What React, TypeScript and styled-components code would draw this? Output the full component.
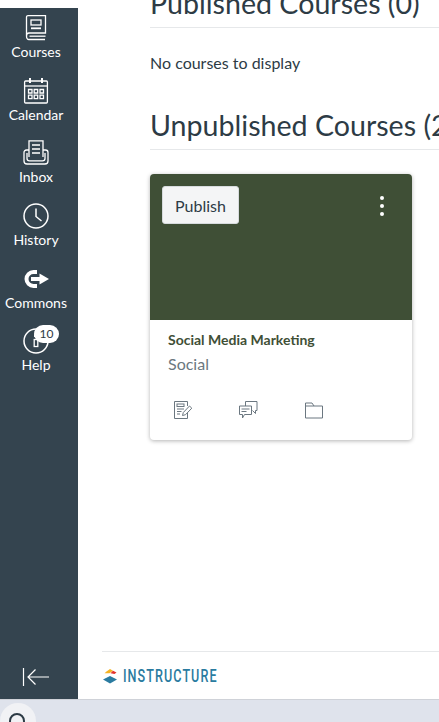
import styled, { createGlobalStyle } from 'styled-components'
import { FC, ReactNode } from 'react'

const GlobalStyle = createGlobalStyle`
  html, body {
    margin: 0;
    padding: 0;
    height: 100%;
    overflow: hidden;
    background: #fff;
    font-family: Lato, "Liberation Sans", sans-serif;
  }
`

const NAV_ITEMS: { label: string; icon: ReactNode; badge?: string }[] = [
  {
    label: 'Courses',
    icon: (
      <svg width="26" height="26" viewBox="0 0 26 26" fill="none" stroke="currentColor" strokeWidth="1.3">
        <path d="M3.5 21V2.2C3.5 1.2 4.2 .7 5 .7H22.5V18H6C4.5 18 3.5 19.5 3.5 21C3.5 23.3 5 24.5 6 24.5H22" />
        <path d="M6.5 21.2H22.5" />
        <rect x="8" y="5" width="10" height="5" />
        <path d="M8 13.3H18" strokeWidth="1.8" />
      </svg>
    ),
  },
  {
    label: 'Calendar',
    icon: (
      <svg width="26" height="26" viewBox="0 0 26 26" fill="none" stroke="currentColor" strokeWidth="1.3">
        <rect x="1.6" y="3" width="22.8" height="22" rx="1" />
        <path d="M1.6 8H24.4" />
        <path d="M7 0V5M19 0V5" strokeWidth="2" />
        <path
          d="M5.5 11.5h3.5v3.5h-3.5zM11.2 11.5h3.5v3.5h-3.5zM17 11.5h3.5v3.5h-3.5zM5.5 17.2h3.5v3.5h-3.5zM11.2 17.2h3.5v3.5h-3.5zM17 17.2h3.5v3.5h-3.5z"
        />
      </svg>
    ),
  },
  {
    label: 'Inbox',
    icon: (
      <svg width="26" height="26" viewBox="0 0 26 26" fill="none" stroke="currentColor" strokeWidth="1.3">
        <path d="M6 17V.8H20V17" />
        <path d="M9 5H17M9 9H17M9 13H17" strokeWidth="1.5" />
        <path d="M6 10H3.5C2 10 1 11 1 12.5V21C1 23 2.2 24 4 24H22C23.8 24 25 23 25 21V12.5C25 11 24 10 22.5 10H20" />
        <path d="M4 13V18.5C4 20 5 20.8 6.5 20.8H19.5C21 20.8 22 20 22 18.5V13" />
      </svg>
    ),
  },
  {
    label: 'History',
    icon: (
      <svg width="26" height="26" viewBox="0 0 26 26" fill="none" stroke="currentColor" strokeWidth="1.5">
        <circle cx="13" cy="13" r="12" />
        <path d="M13 5.5V13.5L18.5 18" />
      </svg>
    ),
  },
  {
    label: 'Commons',
    icon: (
      <svg width="26" height="26" viewBox="0 0 26 26">
        <path d="M14 6H10.5A7 7 0 0 0 10.5 20H14" fill="none" stroke="currentColor" strokeWidth="4" />
        <path d="M8 11H16.5V7.5L26 13L16.5 18.5V15H8Z" fill="currentColor" />
      </svg>
    ),
  },
  {
    label: 'Help',
    badge: '10',
    icon: (
      <svg width="26" height="26" viewBox="0 0 26 26" fill="none" stroke="currentColor" strokeWidth="1.5">
        <circle cx="13" cy="13" r="12" />
        <rect x="11.2" y="11.5" width="3.6" height="7" strokeWidth="1.3" />
        <path d="M11 6.5H14.5V9H11Z" fill="currentColor" stroke="none" />
      </svg>
    ),
  },
]

const App: FC = () => {
  return (
    <Page>
      <GlobalStyle />
      <Main>
        <Sidebar>
          <NavList>
            {NAV_ITEMS.map((item) => (
              <NavItem key={item.label}>
                <NavIcon>
                  {item.icon}
                  {item.badge && <Badge>{item.badge}</Badge>}
                </NavIcon>
                <NavLabel>{item.label}</NavLabel>
              </NavItem>
            ))}
          </NavList>
          <CollapseButton>
            <svg width="28" height="20" viewBox="0 0 28 20" fill="none" stroke="currentColor" strokeWidth="1.2">
              <path d="M1.5 1V19" />
              <path d="M27 10H6M13.5 2.5L6 10L13.5 17.5" />
            </svg>
          </CollapseButton>
        </Sidebar>
        <Content>
          <Scroller>
            <SectionHeading>Published Courses (0)</SectionHeading>
            <EmptyText>No courses to display</EmptyText>
            <SectionHeading>Unpublished Courses (2)</SectionHeading>
            <Card>
              <CardHero>
                <PublishButton>Publish</PublishButton>
                <KebabButton>
                  <i />
                  <i />
                  <i />
                </KebabButton>
              </CardHero>
              <CardBody>
                <CardTitle>Social Media Marketing</CardTitle>
                <CardSubtitle>Social</CardSubtitle>
                <CardActions>
                  <CardAction>
                    <svg width="20" height="20" viewBox="0 0 20 20" fill="none" stroke="currentColor" strokeWidth="1">
                      <path d="M14.5 6V1.5H1.5V18.5H14.5V13" />
                      <rect x="4" y="4" width="7" height="2.5" />
                      <path d="M4 9H11M4 11.5H8.5M4 14H7" />
                      <path d="M9.5 15.5L10.3 12.5L16.5 6L18.8 8.2L12.5 14.7Z" />
                    </svg>
                  </CardAction>
                  <CardAction>
                    <svg width="20" height="20" viewBox="0 0 20 20" fill="none" stroke="currentColor" strokeWidth="1">
                      <path d="M7.5 6V1.5H19V10.5H17.5V13.5L14.5 10.5" />
                      <path d="M1.5 6H13.5V14.5H6.5L4.5 18V14.5H1.5Z" />
                      <path d="M3.5 9H11.5M3.5 11.5H8.5" />
                    </svg>
                  </CardAction>
                  <CardAction>
                    <svg width="20" height="20" viewBox="0 0 20 20" fill="none" stroke="currentColor" strokeWidth="1">
                      <path d="M1.5 3H8L10 6H18.5V18H1.5Z" />
                      <path d="M1.5 6H10" />
                    </svg>
                  </CardAction>
                </CardActions>
              </CardBody>
            </Card>
          </Scroller>
          <Footer>
            <svg width="16" height="16" viewBox="0 0 16 16">
              <path d="M4.5 3.5L8 1L11 2.8L7.5 5.2H2.5Z" fill="#f5b324" />
              <path d="M8.5 5.2L11 2.8L14.5 4.5L12.5 6Z" fill="#e3322c" />
              <path d="M8 8L15 11.5L8 15.5L1 11.5Z" fill="#2a7ba0" />
            </svg>
            <FooterBrand>INSTRUCTURE</FooterBrand>
          </Footer>
        </Content>
      </Main>
      <BottomBar>
        <SearchCircle>
          <svg width="20" height="20" viewBox="0 0 20 20" fill="none" stroke="#2d3b45" strokeWidth="2">
            <circle cx="9" cy="9" r="7" />
          </svg>
        </SearchCircle>
      </BottomBar>
    </Page>
  )
}

export default App

const Page = styled.div`
  display: flex;
  flex-direction: column;
  width: 439px;
  height: 722px;
  overflow: hidden;
`
const Main = styled.div`
  display: flex;
  flex: 1;
  min-height: 0;
`
const Sidebar = styled.nav`
  box-sizing: border-box;
  display: flex;
  flex-direction: column;
  justify-content: space-between;
  flex-shrink: 0;
  width: 78px;
  margin-top: 8px;
  padding: 7px 6px 12px 0;
  background: #34444f;
  color: #fff;
`
const NavList = styled.div`
  display: flex;
  flex-direction: column;
`
const NavItem = styled.div`
  display: flex;
  flex-direction: column;
  align-items: center;
  height: 62.68px;
`
const NavIcon = styled.div`
  position: relative;
  width: 26px;
  height: 26px;
  margin-bottom: 2px;
`
const NavLabel = styled.span`
  font-size: 14px;
  line-height: 18px;
  color: #fff;
`
const Badge = styled.span`
  position: absolute;
  top: -3px;
  left: 11px;
  box-sizing: border-box;
  min-width: 25px;
  height: 18px;
  border-radius: 9px;
  background: #fff;
  color: #2d3b45;
  font-size: 12px;
  line-height: 18px;
  text-align: center;
`
const CollapseButton = styled.div`
  display: flex;
  justify-content: center;
  color: #fff;
`
const Content = styled.main`
  display: flex;
  flex-direction: column;
  flex: 1;
  min-width: 0;
  overflow: hidden;
`
const Scroller = styled.div`
  flex: 1;
  min-height: 0;
  margin-top: -13px;
  padding-left: 72px;
`
const SectionHeading = styled.h2`
  box-sizing: border-box;
  height: 41px;
  margin: 0;
  border-bottom: 1px solid #e6e8ea;
  font-size: 28.6px;
  font-weight: 400;
  line-height: 33px;
  color: #2d3b45;
  white-space: nowrap;
`
const EmptyText = styled.p`
  height: 81px;
  margin: 0;
  padding-top: 25px;
  box-sizing: border-box;
  font-size: 16px;
  line-height: 20px;
  color: #2d3b45;
`
const Card = styled.div`
  width: 262px;
  height: 266px;
  margin-top: 24px;
  border-radius: 4px;
  background: #fff;
  box-shadow: 0 1px 4px rgba(0, 0, 0, 0.3);
  overflow: hidden;
`
const CardHero = styled.div`
  display: flex;
  align-items: flex-start;
  justify-content: space-between;
  box-sizing: border-box;
  height: 146px;
  padding: 12px 28px 0 12px;
  background: #3f4f36;
`
const PublishButton = styled.button`
  box-sizing: border-box;
  width: 77px;
  height: 38px;
  padding: 0;
  border: 1px solid #d7dbde;
  border-radius: 3px;
  background: #f4f5f6;
  color: #2d3b45;
  font-family: inherit;
  font-size: 16px;
`
const KebabButton = styled.div`
  display: flex;
  flex-direction: column;
  gap: 4px;
  margin-top: 10px;
  i {
    display: block;
    width: 4px;
    height: 4px;
    border-radius: 50%;
    background: #fff;
  }
`
const CardBody = styled.div`
  padding: 11px 18px 0;
`
const CardTitle = styled.div`
  font-size: 14px;
  font-weight: 700;
  line-height: 17px;
  color: #3f4f36;
`
const CardSubtitle = styled.div`
  margin-top: 6px;
  font-size: 16px;
  line-height: 20px;
  color: #6b7780;
`
const CardActions = styled.div`
  display: flex;
  gap: 45.5px;
  margin-top: 26px;
  padding-left: 4.5px;
`
const CardAction = styled.div`
  width: 20px;
  height: 20px;
  color: #6b7780;
`
const Footer = styled.footer`
  display: flex;
  align-items: center;
  gap: 5px;
  flex-shrink: 0;
  height: 47px;
  margin-left: 24px;
  border-top: 1px solid #e6e8ea;
`
const FooterBrand = styled.span`
  font-family: "Roboto", "Liberation Sans", sans-serif;
  font-size: 18px;
  font-weight: 500;
  letter-spacing: 1.5px;
  color: #2a7ba0;
  transform: scaleX(0.7);
  transform-origin: left center;
`
const BottomBar = styled.div`
  flex-shrink: 0;
  height: 23px;
  border-top: 1px solid #cfd2d8;
  background: #dfe3ec;
  box-sizing: border-box;
`
const SearchCircle = styled.div`
  display: flex;
  justify-content: center;
  width: 36px;
  height: 36px;
  padding-top: 9px;
  box-sizing: border-box;
  margin-top: 3px;
  border-radius: 50%;
  background: #f1f2f5;
`
